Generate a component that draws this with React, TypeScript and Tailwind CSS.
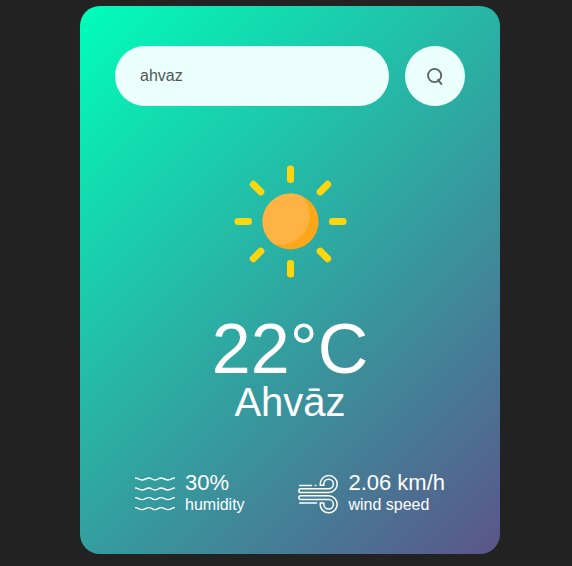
const RAY_ANGLES = [0, 45, 90, 135, 180, 225, 270, 315];

function SunIcon() {
  return (
    <svg width="114" height="114" viewBox="-57.5 -57.5 114 114" aria-label="Clear sky">
      <defs>
        <clipPath id="sun-disc">
          <circle r="28" />
        </clipPath>
      </defs>
      {RAY_ANGLES.map((angle) => (
        <rect key={angle} x="-3.5" y="-56" width="7" height="17.5" rx="3.3" fill="#fdd60d" transform={`rotate(${angle})`} />
      ))}
      <circle r="28" fill="#ffa718" />
      <circle cx="-10.3" cy="-6" r="29.3" fill="#ffb344" clipPath="url(#sun-disc)" />
    </svg>
  );
}

function SearchIcon() {
  return (
    <svg width="18" height="20" viewBox="0 0 18 20" fill="none" stroke="#5c6665" strokeWidth="1.9">
      <circle cx="8.6" cy="9.5" r="6.6" />
      <path d="M11.6 13.2 L15.8 18.6" />
    </svg>
  );
}

const WAVE_ROWS = [5, 15, 24.6, 34.6];

function HumidityIcon() {
  return (
    <svg width="40" height="40" viewBox="0 0 40 40" fill="none" stroke="white" strokeWidth="1.4" strokeLinecap="round">
      {WAVE_ROWS.map((y) => (
        <path
          key={y}
          transform={`translate(0 ${y})`}
          d="M.5-1C3-1 4 1 7 1S11-1 14-1S17 1 20 1S23-1 26-1S30 1 33 1S37-1 39.5-1"
        />
      ))}
    </svg>
  );
}

function WindIcon() {
  return (
    <svg width="40" height="40" viewBox="0 0 40 40" fill="none" stroke="white" strokeWidth="1.5" strokeLinecap="round" strokeLinejoin="round">
      <path d="M1.6 11.4H13.5M17.2 11.4H17.8" />
      <path d="M22.2 11.3V10A8.5 8.5 0 1 1 30.6 18.5H2.7A1.8 1.8 0 0 1 2.7 14.8H30.6A4.8 4.8 0 1 0 25.8 10V11.3Z" />
      <path d="M22.2 29.1V30.4A8.5 8.5 0 1 0 30.6 21.8H2.7A1.8 1.8 0 0 0 2.7 25.5H30.6A4.8 4.8 0 1 1 25.8 30.3V29.1Z" />
      <path d="M1.6 28.9H18.5" />
    </svg>
  );
}

export default function App() {
  return (
    <main className="h-[566px] bg-[#222] pt-1.5 pl-20 font-['Liberation_Sans',Arial,sans-serif]">
      <section className="h-[548px] w-[420px] rounded-[20px] bg-[linear-gradient(135deg,#00feba,#5b548a)] px-[35px] pt-10 text-center text-white">
        <div className="flex items-center justify-between">
          <input
            type="text"
            defaultValue="ahvaz"
            aria-label="City"
            spellCheck={false}
            className="h-[60px] w-[274px] rounded-[30px] bg-[#ebfffc] px-[25px] text-base text-[#555] outline-none"
          />
          <button aria-label="Search" className="flex size-[60px] items-center justify-center rounded-full bg-[#ebfffc]">
            <SearchIcon />
          </button>
        </div>

        <div className="mt-[58px] flex justify-center">
          <SunIcon />
        </div>
        <h1 className="mt-[37px] text-[70px] leading-[68px] font-medium">22°C</h1>
        <h2 className="text-[40px] leading-[38px] font-normal">Ahvāz</h2>

        <div className="mt-[50px] flex items-start justify-between px-5 text-left">
          <div className="flex items-start gap-2.5">
            <div className="pt-[3px]"><HumidityIcon /></div>
            <div>
              <p className="text-[22px] leading-[23px]">30%</p>
              <p className="pt-px text-base leading-5">humidity</p>
            </div>
          </div>
          <div className="flex items-start gap-2.5">
            <div className="pt-[3px]"><WindIcon /></div>
            <div>
              <p className="text-[22px] leading-[23px]">2.06 km/h</p>
              <p className="pt-px text-base leading-5">wind speed</p>
            </div>
          </div>
        </div>
      </section>
    </main>
  );
}
